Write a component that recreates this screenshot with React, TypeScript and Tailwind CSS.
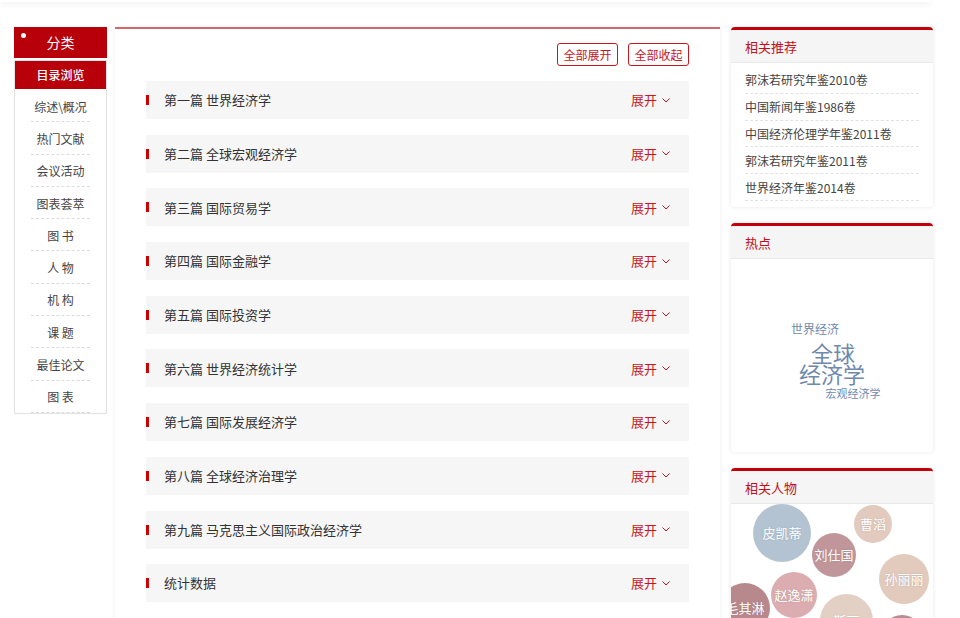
import React from "react";

const navItems = ["综述\\概况", "热门文献", "会议活动", "图表荟萃", "图 书", "人 物", "机 构", "课 题", "最佳论文", "图 表"];

const chapters = [
  "第一篇 世界经济学",
  "第二篇 全球宏观经济学",
  "第三篇 国际贸易学",
  "第四篇 国际金融学",
  "第五篇 国际投资学",
  "第六篇 世界经济统计学",
  "第七篇 国际发展经济学",
  "第八篇 全球经济治理学",
  "第九篇 马克思主义国际政治经济学",
  "统计数据",
];

const related = ["郭沫若研究年鉴2010卷", "中国新闻年鉴1986卷", "中国经济伦理学年鉴2011卷", "郭沫若研究年鉴2011卷", "世界经济年鉴2014卷"];

const people = [
  { name: "皮凯蒂", left: 22, top: 0, size: 58, color: "rgba(160,180,198,0.8)" },
  { name: "曹滔", left: 123, top: 1, size: 38, color: "rgba(214,180,162,0.7)" },
  { name: "刘仕国", left: 81, top: 29, size: 44, color: "rgba(176,124,130,0.8)" },
  { name: "孙丽丽", left: 148, top: 50, size: 50, color: "rgba(216,184,166,0.75)" },
  { name: "赵逸潇", left: 40, top: 68, size: 46, color: "rgba(210,152,156,0.8)" },
  { name: "毛其淋", left: -11, top: 79, size: 50, color: "rgba(172,116,120,0.85)" },
  { name: "靳丽", left: 89, top: 90, size: 53, color: "rgba(218,192,176,0.75)" },
  { name: "", left: 149, top: 111, size: 44, color: "rgba(172,120,126,0.85)" },
];

const Chevron = () => (
  <svg width="8" height="5" viewBox="0 0 8 5" fill="none">
    <polyline points="0.5,0.5 4,4 7.5,0.5" stroke="#c8161e" strokeWidth="1" />
  </svg>
);

const CardHead = ({ title }: { title: string }) => (
  <div className="h-[33px] bg-[#f5f5f5] border-b border-[#e8e8e8] flex items-center px-[14px] pt-[1px] text-[13px] text-[#c0111a]">
    {title}
  </div>
);

export default function App() {
  return (
    <div className="min-h-screen bg-white font-['Noto_Sans_CJK_SC','Noto_Sans',sans-serif] text-[#333]">
      <div className="h-[2px] w-[930px] bg-white shadow-[0_1px_6px_rgba(0,0,0,0.14)]" />
      <div className="ml-[14px] mt-[25px] w-[920px] flex items-start">
        {/* left nav */}
        <div className="w-[93px] shrink-0">
          <div className="relative h-[31px] bg-[#b8000b] text-white text-[14px] flex items-center justify-center">
            <span className="absolute left-[7px] top-[6px] w-[5px] h-[5px] rounded-full bg-white" />
            分类
          </div>
          <div className="mt-[2px] border border-[#e2e2e2]">
            <div className="h-[28px] bg-[#b8000b] text-white text-[12px] font-medium flex items-center justify-center">目录浏览</div>
            <div className="pt-[1px]">
              {navItems.map((n) => (
                <div key={n} className="h-[32.3px] mx-[16px] border-b border-dashed border-[#dcdcdc] flex items-center justify-center pt-[2px] text-[12px] text-[#444] whitespace-pre">
                  {n}
                </div>
              ))}
            </div>
          </div>
        </div>

        {/* main */}
        <div className="ml-[8px] w-[605px] shrink-0 bg-white border-t-2 border-[#d4696d] shadow-[0_0_4px_rgba(0,0,0,0.08)] px-[31px] pt-[14px] pb-[30px]">
          <div className="flex justify-end gap-[10px]">
            <button className="h-[23px] w-[61px] border border-[#c8161e] rounded-[3px] text-[12px] text-[#c8161e] leading-none">全部展开</button>
            <button className="h-[23px] w-[61px] border border-[#c8161e] rounded-[3px] text-[12px] text-[#c8161e] leading-none">全部收起</button>
          </div>
          <div className="mt-[15px] flex flex-col gap-[15.7px]">
            {chapters.map((c) => (
              <div key={c} className="h-[38px] bg-[#f6f6f6] flex items-center">
                <span className="w-[3px] h-[10px] bg-[#c00]" />
                <span className="ml-[15px] text-[13px] text-[#333]">{c}</span>
                <span className="ml-auto mr-[19px] flex items-center gap-[5px] text-[13px] text-[#c8161e]">
                  展开
                  <Chevron />
                </span>
              </div>
            ))}
          </div>
        </div>

        {/* right */}
        <div className="ml-[11px] w-[202px] shrink-0 flex flex-col gap-[16px]">
          <div className="rounded-[4px] border-t-[3px] border-[#c0000b] bg-white shadow-[0_0_4px_rgba(0,0,0,0.1)] overflow-hidden">
            <CardHead title="相关推荐" />
            <div className="px-[14px] pt-[4px] pb-[6px]">
              {related.map((r) => (
                <div key={r} className="h-[26.8px] border-b border-dashed border-[#e2e2e2] flex items-center pt-[1px] text-[12px] text-[#444]">
                  {r}
                </div>
              ))}
            </div>
          </div>

          <div className="rounded-[4px] border-t-[3px] border-[#c0000b] bg-white shadow-[0_0_4px_rgba(0,0,0,0.1)] overflow-hidden">
            <CardHead title="热点" />
            <div className="h-[193px] flex flex-col items-center text-[#6f89ad] leading-none pt-[64px]">
              <div className="text-[12px] -ml-[34px]">世界经济</div>
              <div className="text-[22px] mt-[6px] ml-[2px]">全球</div>
              <div className="text-[22px] -mt-[1px]">经济学</div>
              <div className="text-[11px] ml-[42px] mt-[4px]">宏观经济学</div>
            </div>
          </div>

          <div className="rounded-[4px] border-t-[3px] border-[#c0000b] bg-white shadow-[0_0_4px_rgba(0,0,0,0.1)] overflow-hidden">
            <CardHead title="相关人物" />
            <div className="relative h-[200px] overflow-hidden">
              {people.map((p, i) => (
                <div
                  key={i}
                  className="absolute rounded-full flex items-center justify-center text-white text-[13px] [text-shadow:0_0_2px_rgba(0,0,0,0.15)]"
                  style={{ left: p.left, top: p.top, width: p.size, height: p.size, background: p.color }}
                >
                  {p.name}
                </div>
              ))}
            </div>
          </div>
        </div>
      </div>
    </div>
  );
}
